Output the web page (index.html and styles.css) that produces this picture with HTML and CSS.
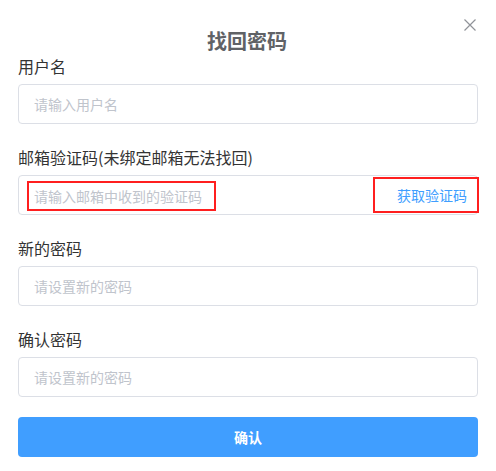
FILE: index.html
```html
<!DOCTYPE html>
<html lang="zh-CN">
<head>
<meta charset="utf-8">
<title>找回密码</title>
<link rel="stylesheet" href="styles.css">
</head>
<body>
<div class="dialog">
  <button class="close" type="button" aria-label="关闭">
    <svg width="12" height="12" viewBox="0 0 12 12"><path d="M0.5 0.5L11.5 11.5M11.5 0.5L0.5 11.5" stroke="#909399" stroke-width="1.2" fill="none"/></svg>
  </button>
  <h2 class="title">找回密码</h2>
  <form class="form">
    <div class="item">
      <label class="label">用户名</label>
      <input class="input" type="text" placeholder="请输入用户名">
    </div>
    <div class="item">
      <label class="label">邮箱验证码(未绑定邮箱无法找回)</label>
      <div class="field">
        <div class="mark">
          <input class="code-input" type="text" placeholder="请输入邮箱中收到的验证码">
        </div>
        <button class="get-code" type="button">获取验证码</button>
      </div>
    </div>
    <div class="item">
      <label class="label">新的密码</label>
      <input class="input" type="password" placeholder="请设置新的密码">
    </div>
    <div class="item">
      <label class="label">确认密码</label>
      <input class="input" type="password" placeholder="请设置新的密码">
    </div>
    <button class="submit" type="button">确认</button>
  </form>
</div>
</body>
</html>
```

FILE: styles.css
```css
* { box-sizing: border-box; }
html, body {
  margin: 0;
  padding: 0;
  background: #fff;
  font-family: "Noto Sans CJK SC", "Noto Sans", sans-serif;
}
.dialog {
  position: relative;
  width: 496px;
  height: 471px;
  padding: 29px 18px 0 18px;
}
.close {
  position: absolute;
  top: 18px;
  left: 463px;
  width: 13px;
  height: 13px;
  padding: 0;
  border: 0;
  background: transparent;
  display: flex;
  align-items: center;
  justify-content: center;
}
.title {
  margin: 0 0 1px 0;
  font-size: 20px;
  line-height: 24px;
  font-weight: 700;
  color: #606266;
  text-align: center;
  padding-right: 2px;
}
.form {
  display: flex;
  flex-direction: column;
}
.item {
  display: flex;
  flex-direction: column;
  margin-bottom: 21px;
}
.item:last-of-type { margin-bottom: 20px; }
.label {
  font-size: 16px;
  line-height: 24px;
  color: #333;
  margin-bottom: 6px;
}
.input {
  height: 40px;
  width: 100%;
  border: 1px solid #dcdfe6;
  border-radius: 4px;
  padding: 0 15px;
  font-size: 14px;
  font-family: inherit;
  color: #606266;
  outline: none;
  background: #fff;
}
.input::placeholder, .code-input::placeholder { color: #c0c4cc; }
.field {
  height: 40px;
  border: 1px solid #dcdfe6;
  border-radius: 4px;
  display: flex;
  align-items: center;
  justify-content: space-between;
  padding-left: 8px;
}
.mark {
  width: 189px;
  height: 30px;
  border: 2px solid #ff1f1f;
  display: flex;
  align-items: center;
  margin-top: 1px;
}
.code-input {
  width: 100%;
  height: 100%;
  border: 0;
  outline: none;
  padding: 0 0 0 5px;
  font-size: 14px;
  font-family: inherit;
  background: transparent;
}
.get-code {
  width: 106px;
  height: 36px;
  margin-right: -2px;
  border: 2px solid #ff1f1f;
  background: transparent;
  color: #409eff;
  font-size: 14px;
  font-family: inherit;
  text-align: right;
  padding: 0 10px 0 0;
}
.submit {
  height: 40px;
  width: 100%;
  border: 0;
  border-radius: 4px;
  background: #409eff;
  color: #fff;
  font-size: 14px;
  font-weight: 700;
  font-family: inherit;
}
```
